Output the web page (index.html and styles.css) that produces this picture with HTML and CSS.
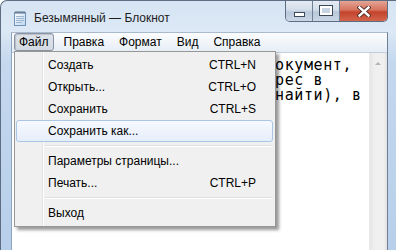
FILE: index.html
```html
<!DOCTYPE html>
<html lang="ru">
<head>
<meta charset="utf-8">
<title>Блокнот</title>
<link rel="stylesheet" href="styles.css">
</head>
<body>
<div class="window">
  <div class="titlebar">
    <svg class="app-icon" width="14" height="16" viewBox="0 0 14 16">
      <defs>
        <linearGradient id="pg" x1="0" y1="0" x2="1" y2="1">
          <stop offset="0" stop-color="#ffffff"/>
          <stop offset="1" stop-color="#bcd6ee"/>
        </linearGradient>
      </defs>
      <rect x="1.5" y="2.5" width="11" height="13" fill="url(#pg)" stroke="#6f93b8"/>
      <path d="M3 6.5h8M3 8.5h8M3 10.5h8M3 12.5h6" stroke="#9db6cf" stroke-width="1"/>
      <path d="M3 1v3M5 1v3M7 1v3M9 1v3M11 1v3" stroke="#5a6f86" stroke-width="1"/>
    </svg>
    <span class="title">Безымянный — Блокнот</span>
    <div class="caption-buttons">
      <div class="cbtn cbtn-min"><span class="glyph-min"></span></div>
      <div class="cbtn cbtn-max"><span class="glyph-max"></span></div>
      <div class="cbtn cbtn-close">
        <svg width="14" height="11" viewBox="0 0 14 11">
          <path d="M2.5 1.5L11.5 9.5M11.5 1.5L2.5 9.5" stroke="#4a2a25" stroke-width="4.2" stroke-linecap="square"/>
          <path d="M2.5 1.5L11.5 9.5M11.5 1.5L2.5 9.5" stroke="#ffffff" stroke-width="2.4" stroke-linecap="square"/>
        </svg>
      </div>
    </div>
  </div>
  <div class="client">
    <div class="menubar">
      <span class="mitem active">Файл</span>
      <span class="mitem">Правка</span>
      <span class="mitem">Формат</span>
      <span class="mitem">Вид</span>
      <span class="mitem">Справка</span>
    </div>
    <div class="editor-area">
      <div class="editor"><div class="line">окумент,</div><div class="line">рес в</div><div class="line">найти), в</div></div>
      <div class="vscroll">
        <div class="arrow-up"></div>
      </div>
    </div>
  </div>
  <div class="dropdown">
    <div class="ditem"><span>Создать</span><span class="key">CTRL+N</span></div>
    <div class="ditem"><span>Открыть...</span><span class="key">CTRL+O</span></div>
    <div class="ditem"><span>Сохранить</span><span class="key">CTRL+S</span></div>
    <div class="ditem hot"><span>Сохранить как...</span></div>
    <div class="dsep"></div>
    <div class="ditem"><span>Параметры страницы...</span></div>
    <div class="ditem"><span>Печать...</span><span class="key">CTRL+P</span></div>
    <div class="dsep"></div>
    <div class="ditem"><span>Выход</span></div>
  </div>
</div>
</body>
</html>
```

FILE: styles.css
```css
html, body {
  margin: 0;
  padding: 0;
  width: 396px;
  height: 250px;
  overflow: hidden;
  background: #ffffff;
}

.window {
  position: relative;
  width: 396px;
  height: 250px;
  box-sizing: border-box;
  border-left: 1px solid #5d6d82;
  border-top: 1px solid #5d6d82;
  border-top-left-radius: 7px;
  padding: 0 8px 0 10px;
  background: linear-gradient(to bottom, #d6e4f3 0px, #dce8f5 30px, #c4d8ee 60px, #b7cfea 250px);
  font-family: "Liberation Sans", Arial, sans-serif;
  font-size: 12px;
  color: #000;
  display: flex;
  flex-direction: column;
}

.titlebar {
  height: 31px;
  display: flex;
  align-items: center;
  position: relative;
}

.app-icon {
  margin-left: 2px;
  margin-top: 2px;
}

.title {
  margin-left: 7px;
  margin-top: 3px;
  font-size: 12px;
  color: #1e1e1e;
}

.caption-buttons {
  position: absolute;
  right: 0;
  top: 0;
  display: flex;
  height: 20px;
  border: 1px solid #5c6c82;
  border-top: none;
  border-radius: 0 0 5px 5px;
  overflow: hidden;
}

.cbtn {
  height: 20px;
  display: flex;
  align-items: center;
  justify-content: center;
  box-sizing: border-box;
}

.cbtn-min, .cbtn-max {
  width: 27px;
  background: linear-gradient(to bottom, #e4ebf4 0%, #d3dde9 45%, #b9c8da 55%, #c9d6e6 100%);
  border-right: 1px solid #6f7f95;
}

.cbtn-close {
  width: 47px;
  background: linear-gradient(to bottom, #e4a596 0%, #d6735e 45%, #c4432c 55%, #d2654c 100%);
}

.glyph-min {
  display: block;
  width: 9px;
  height: 3px;
  background: #ffffff;
  border: 1px solid #3d4a5c;
  margin-top: 6px;
}

.glyph-max {
  display: block;
  width: 8px;
  height: 5px;
  background: #c7d3e2;
  border: 2px solid #ffffff;
  outline: 1px solid #3d4a5c;
  margin-top: -2px;
}

.client {
  flex: 1;
  display: flex;
  flex-direction: column;
  border-left: 1px solid #8ea4be;
  border-right: 1px solid #6e7f95;
  border-top: 1px solid #a9bacd;
  background: #ffffff;
  min-height: 0;
}

.menubar {
  height: 19px;
  display: flex;
  align-items: flex-start;
  padding-left: 2px;
  background: linear-gradient(to bottom, #fbfcfe 0%, #f1f5fa 50%, #e6edf6 100%);
  border-bottom: 1px solid #c3cfdc;
}

.mitem {
  height: 18px;
  line-height: 17px;
  padding: 0 4px;
  margin-right: 5px;
  border: 1px solid transparent;
  border-radius: 3px;
  box-sizing: border-box;
}

.mitem.active {
  border-color: #8995a5;
  background: linear-gradient(to bottom, #dfe4eb 0%, #d3d9e2 100%);
  box-shadow: inset 1px 1px 1px rgba(0, 0, 0, 0.15);
}

.editor-area {
  flex: 1;
  display: flex;
  min-height: 0;
}

.editor {
  flex: 1;
  overflow: hidden;
  padding: 5px 0 0 263px;
  font-family: "DejaVu Sans Mono", "Liberation Mono", monospace;
  font-size: 15px;
  letter-spacing: 0.6px;
  line-height: 15px;
  white-space: pre;
  color: #000;
}

.vscroll {
  width: 17px;
  background: linear-gradient(to right, #e6e6e6 0%, #f0f0f0 30%, #f0f0f0 80%, #e2e2e2 100%);
  border-left: 1px solid #e9e9e9;
  position: relative;
}

.arrow-up {
  position: absolute;
  left: 5px;
  top: 9px;
  width: 0;
  height: 0;
  border-left: 3px solid transparent;
  border-right: 3px solid transparent;
  border-bottom: 3px solid #b4b4b4;
}

.dropdown {
  position: absolute;
  left: 13px;
  top: 50px;
  width: 262px;
  box-sizing: border-box;
  border: 1px solid #979797;
  padding: 2px 0;
  background:
    linear-gradient(to right, transparent 0, transparent 27px, #e2e3e3 27px, #e2e3e3 28px, #ffffff 28px, #ffffff 29px, transparent 29px),
    #f0f0f0;
  box-shadow: 3px 3px 3px rgba(0, 0, 0, 0.4);
}

.ditem {
  height: 22px;
  margin: 0 2px 0 1px;
  border: 1px solid transparent;
  border-radius: 3px;
  box-sizing: border-box;
  display: flex;
  align-items: center;
  justify-content: space-between;
  padding: 0 16px 0 31px;
}

.ditem.hot {
  border-color: #aac5e8;
  background: linear-gradient(to bottom, #f6f9fe 0%, #e6eefa 100%);
}

.dsep {
  height: 8px;
  margin: 0 2px 0 30px;
  display: flex;
  flex-direction: column;
  justify-content: center;
}

.dsep::before {
  content: "";
  display: block;
  height: 1px;
  background: #e0e0e0;
  border-bottom: 1px solid #ffffff;
}
```
